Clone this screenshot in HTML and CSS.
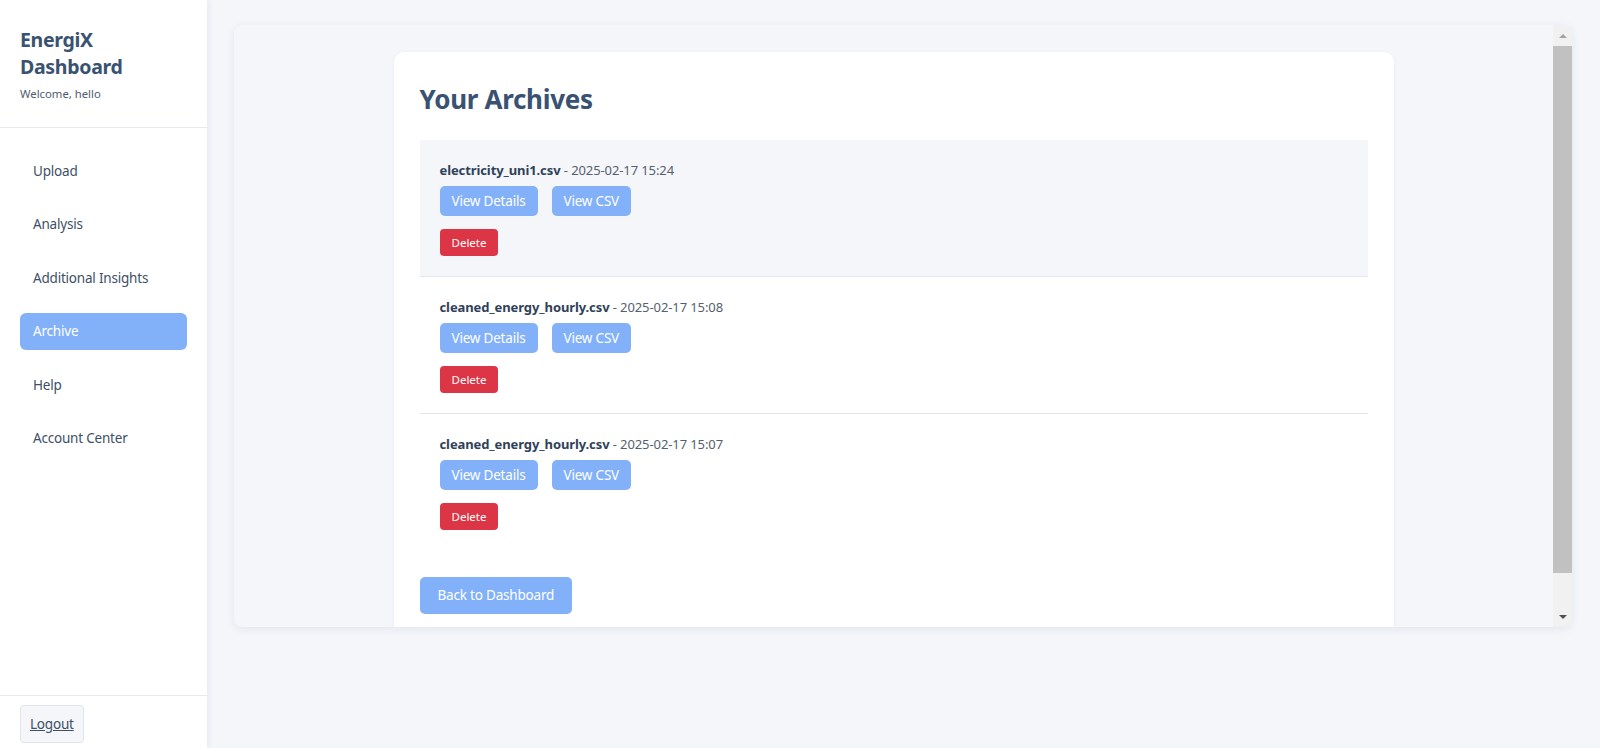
FILE: index.html
```html
<!DOCTYPE html>
<html lang="en">
<head>
<meta charset="utf-8">
<title>EnergiX Dashboard - Archive</title>
<link rel="stylesheet" href="styles.css">
</head>
<body>
<div class="app">
  <aside class="sidebar">
    <div class="sb-head">
      <h1 class="brand">EnergiX Dashboard</h1>
      <p class="welcome">Welcome, hello</p>
    </div>
    <nav class="nav">
      <a class="nav-item" href="#">Upload</a>
      <a class="nav-item" href="#">Analysis</a>
      <a class="nav-item" href="#">Additional Insights</a>
      <a class="nav-item active" href="#">Archive</a>
      <a class="nav-item" href="#">Help</a>
      <a class="nav-item" href="#">Account Center</a>
    </nav>
    <div class="sb-foot">
      <button class="logout">Logout</button>
    </div>
  </aside>
  <main class="main">
    <div class="frame">
      <div class="frame-view">
        <div class="card">
          <h2 class="title">Your Archives</h2>
          <ul class="archives">
            <li class="archive first">
              <div class="meta"><strong>electricity_uni1.csv</strong> - 2025-02-17 15:24</div>
              <div class="actions">
                <a class="btn" href="#">View Details</a>
                <a class="btn" href="#">View CSV</a>
              </div>
              <button class="btn-del">Delete</button>
            </li>
            <li class="archive">
              <div class="meta"><strong>cleaned_energy_hourly.csv</strong> - 2025-02-17 15:08</div>
              <div class="actions">
                <a class="btn" href="#">View Details</a>
                <a class="btn" href="#">View CSV</a>
              </div>
              <button class="btn-del">Delete</button>
            </li>
            <li class="archive">
              <div class="meta"><strong>cleaned_energy_hourly.csv</strong> - 2025-02-17 15:07</div>
              <div class="actions">
                <a class="btn" href="#">View Details</a>
                <a class="btn" href="#">View CSV</a>
              </div>
              <button class="btn-del">Delete</button>
            </li>
          </ul>
          <a class="btn back" href="#">Back to Dashboard</a>
        </div>
      </div>
      <div class="scrollbar">
        <span class="sb-btn sb-up"></span>
        <span class="sb-thumb"></span>
        <span class="sb-track"></span>
        <span class="sb-btn sb-down"></span>
      </div>
    </div>
  </main>
</div>
</body>
</html>
```
FILE: styles.css
```css
* { box-sizing: border-box; }
html, body { margin: 0; padding: 0; height: 100%; }
body {
  font-family: "Noto Sans", "Open Sans", sans-serif;
  background: #f4f6fa;
  color: #3d4f66;
  overflow: hidden;
}
.app { display: flex; height: 100vh; }

.sidebar {
  width: 207px;
  flex: 0 0 207px;
  background: #ffffff;
  display: flex;
  flex-direction: column;
  box-shadow: 2px 0 6px rgba(30, 40, 60, 0.06);
  position: relative;
  z-index: 1;
}
.sb-head {
  padding: 26px 20px 25px;
  border-bottom: 1px solid #e6e9ee;
}
.brand {
  margin: 0;
  font-size: 19.5px;
  line-height: 27px;
  font-weight: 700;
  letter-spacing: -0.3px;
  color: #3a5272;
}
.welcome {
  margin: 6px 0 0;
  font-size: 11.3px;
  line-height: 16px;
  color: #4f5d70;
}
.nav {
  flex: 1;
  padding: 25px 20px;
  display: flex;
  flex-direction: column;
  gap: 16.4px;
}
.nav-item {
  display: block;
  padding: 8px 13px;
  font-size: 13.5px;
  line-height: 21px;
  letter-spacing: -0.2px;
  color: #3d4f66;
  text-decoration: none;
  border-radius: 6px;
}
.nav-item.active {
  background: #82b1f9;
  color: #ffffff;
}
.sb-foot {
  border-top: 1px solid #e6e9ee;
  padding: 9px 20px 5px;
}
.logout {
  font-family: inherit;
  font-size: 13.5px;
  line-height: 20px;
  letter-spacing: -0.2px;
  padding: 8px 9px;
  height: 38px;
  color: #3d4f66;
  background: #f4f6fa;
  border: 1px solid #e1e5eb;
  border-radius: 4px;
  text-decoration: underline;
}

.main {
  flex: 1;
  padding: 25px 28px 0 27px;
}
.frame {
  height: 602px;
  display: flex;
  background: #f4f6fa;
  border-radius: 8px;
  box-shadow: 0 2px 8px rgba(30, 40, 60, 0.08);
  overflow: hidden;
}
.frame-view {
  flex: 1;
  overflow: hidden;
  padding-top: 27px;
}
.card {
  width: 1000px;
  margin: 0 auto;
  background: #ffffff;
  border-radius: 10px;
  padding: 26px;
  box-shadow: 0 1px 4px rgba(30, 40, 60, 0.05);
}
.title {
  margin: 4px 0 24px;
  font-size: 26px;
  line-height: 34px;
  font-weight: 700;
  letter-spacing: -0.3px;
  color: #3a5272;
}
.archives {
  list-style: none;
  margin: 0 0 27px;
  padding: 0;
}
.archive {
  padding: 20px;
  border-bottom: 1px solid #e3e6eb;
}
.archive:last-child { border-bottom: none; }
.archive.first { background: #f4f6fa; }
.meta {
  font-size: 13px;
  line-height: 20px;
  letter-spacing: -0.1px;
  color: #555f6d;
}
.meta strong { color: #2f4158; font-weight: 700; }
.actions {
  display: flex;
  gap: 14px;
  margin: 6px 0 13px;
}
.btn {
  display: inline-block;
  padding: 6px 12px;
  font-size: 13.5px;
  line-height: 18px;
  letter-spacing: -0.2px;
  color: #ffffff;
  background: #82b1f9;
  border-radius: 5px;
  text-decoration: none;
}
.btn-del {
  display: block;
  font-family: inherit;
  padding: 6px 12px;
  font-size: 11.5px;
  line-height: 15px;
  color: #ffffff;
  background: #dc3545;
  border: none;
  border-radius: 4px;
}
.back {
  padding: 9px 18px;
  line-height: 19px;
}

.scrollbar {
  width: 19px;
  flex: 0 0 19px;
  background: #f1f1f1;
  display: flex;
  flex-direction: column;
}
.sb-btn {
  height: 20px;
  flex: 0 0 20px;
  display: flex;
  align-items: center;
  justify-content: center;
}
.sb-up { height: 21px; flex-basis: 21px; }
.sb-up::before {
  content: "";
  border-left: 4px solid transparent;
  border-right: 4px solid transparent;
  border-bottom: 4px solid #a3a3a3;
}
.sb-down::before {
  content: "";
  border-left: 4px solid transparent;
  border-right: 4px solid transparent;
  border-top: 4px solid #505050;
}
.sb-thumb {
  height: 527px;
  flex: 0 0 527px;
  background: #c1c1c1;
}
.sb-track { flex: 1; }
```
